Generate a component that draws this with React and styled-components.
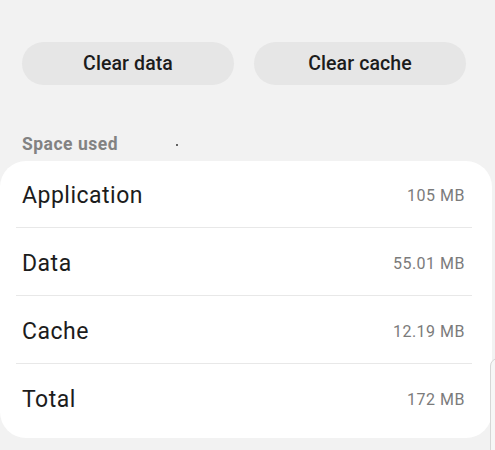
import React from "react";
import styled, { createGlobalStyle } from "styled-components";

const Global = createGlobalStyle`
  html, body { margin: 0; padding: 0; background: #f2f2f2; }
  body { font-family: Roboto, "Noto Sans", "Liberation Sans", sans-serif; overflow: hidden; }
  #root { width: 495px; height: 450px; }
`;

const Page = styled.div`
  position: relative;
  width: 495px;
  height: 450px;
  background: #f2f2f2;
  padding-top: 42px;
  box-sizing: border-box;
  overflow: hidden;
`;

const ButtonRow = styled.div`
  display: flex;
  gap: 20px;
  padding: 0 29px 0 22px;
`;

const PillButton = styled.button`
  flex: 0 0 212px;
  height: 43px;
  border: none;
  border-radius: 22px;
  background: #e6e6e6;
  color: #1c1c1c;
  font-family: Roboto, "Noto Sans", sans-serif;
  font-size: 19.5px;
  font-weight: 500;
  letter-spacing: 0.1px;
  display: flex;
  align-items: center;
  justify-content: center;
  padding: 0;
`;

const SectionHeader = styled.div`
  display: flex;
  align-items: center;
  height: 22px;
  margin-top: 48px;
  padding-left: 22px;
  font-size: 17.5px;
  font-weight: 700;
  letter-spacing: 0.5px;
  color: #828282;
`;

const Speck = styled.span`
  width: 2px;
  height: 2px;
  border-radius: 1px;
  background: #333;
  margin-left: 58px;
  margin-top: 2px;
`;

const Card = styled.div`
  margin-top: 6px;
  width: 492px;
  background: #ffffff;
  border-radius: 26px;
  padding-bottom: 7px;
  box-sizing: border-box;
`;

const Row = styled.div`
  height: ${(p) => (p.$first ? "66px" : "67px")};
  display: flex;
  align-items: center;
  justify-content: space-between;
  padding: 3px 27px 0 22px;
  box-sizing: border-box;
  position: relative;
  margin-bottom: ${(p) => (p.$last ? "0" : "1px")};
  &::after {
    content: "";
    display: ${(p) => (p.$last ? "none" : "block")};
    position: absolute;
    left: 16px;
    right: 20px;
    bottom: -1px;
    height: 1px;
    background: #e8e8e8;
  }
`;

const Label = styled.span`
  font-size: 23px;
  letter-spacing: 0.5px;
  color: #1c1c1c;
  font-weight: 400;
`;

const Value = styled.span`
  font-size: 16px;
  letter-spacing: 0.5px;
  color: #7b7b7b;
`;

const EdgePanel = styled.div`
  position: absolute;
  left: 490px;
  top: 358px;
  width: 30px;
  height: 120px;
  border: 1px solid #d6d6d6;
  border-radius: 8px 0 0 0;
  background: #f6f6f6;
`;

const rows = [
  ["Application", "105 MB"],
  ["Data", "55.01 MB"],
  ["Cache", "12.19 MB"],
  ["Total", "172 MB"],
];

export default function App() {
  return (
    <>
      <Global />
      <Page>
        <ButtonRow>
          <PillButton>Clear data</PillButton>
          <PillButton>Clear cache</PillButton>
        </ButtonRow>
        <SectionHeader>
          Space used
          <Speck />
        </SectionHeader>
        <Card>
          {rows.map(([l, v], i) => (
            <Row key={l} $first={i === 0} $last={i === rows.length - 1}>
              <Label>{l}</Label>
              <Value>{v}</Value>
            </Row>
          ))}
        </Card>
        <EdgePanel />
      </Page>
    </>
  );
}
